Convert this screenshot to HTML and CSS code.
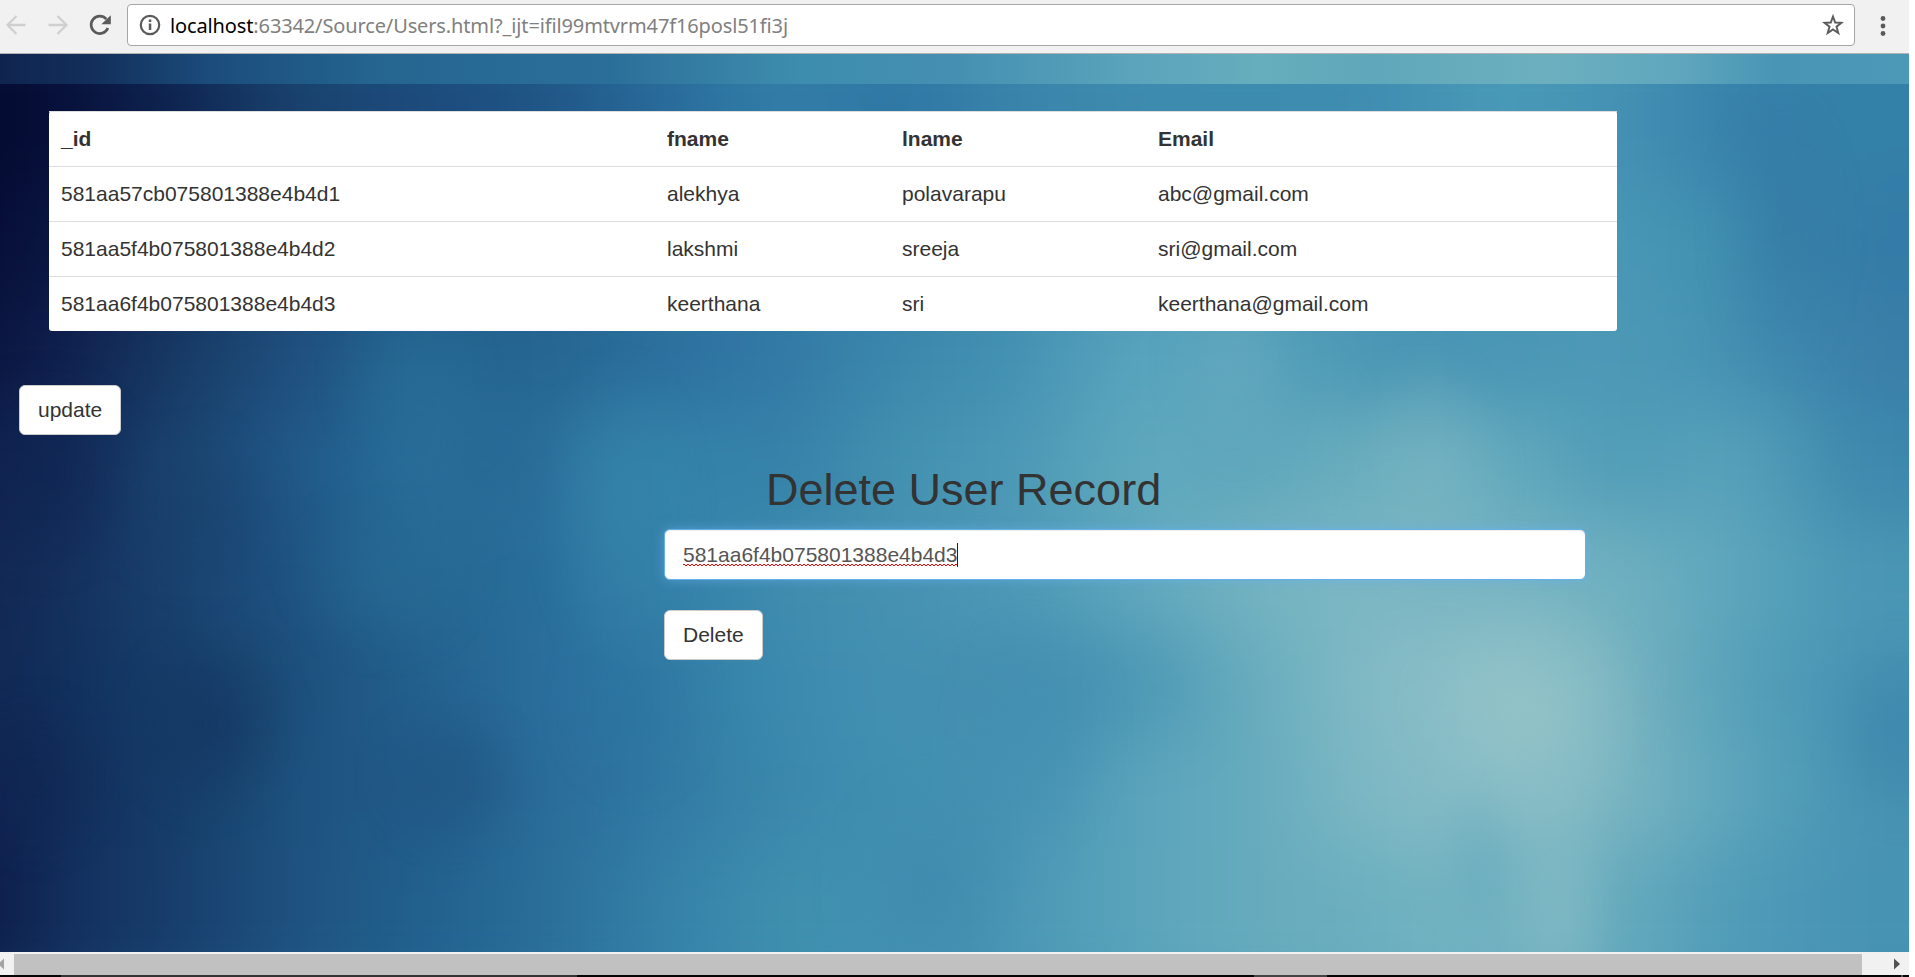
FILE: index.html
```html
<!DOCTYPE html>
<html lang="en">
<head>
<meta charset="utf-8">
<title>Users</title>
<link rel="stylesheet" href="styles.css">
</head>
<body>
<div class="window">
  <header class="toolbar">
    <svg class="nav" viewBox="0 0 118 30" width="118" height="30" fill="none" stroke="#cfcfcf" stroke-width="2.3">
      <path d="M25.5 13H8M16.5 4L7.5 13L16.5 22"/>
      <path d="M48.500 13H66M57.500 4L66.500 13L57.500 22"/>
      <path d="M106.300 7A8.700 8.700 0 1 0 107.900 16" stroke="#5a5a5a" stroke-width="2.700"/>
      <path d="M110.800 3.300V12.200H101.300Z" fill="#5a5a5a" stroke="none"/>
    </svg>
    <div class="address">
      <svg viewBox="0 0 22 22" width="22" height="22"><circle cx="11" cy="11" r="9.200" fill="none" stroke="#5a5a5a" stroke-width="2.200"/><path d="M9.800 9.500h2.500v6.500H9.800zM9.800 5.500h2.500V8H9.800z" fill="#5a5a5a"/></svg>
      <span class="url"><b>localhost</b>:63342/Source/Users.html?_ijt=ifil99mtvrm47f16posl51fi3j</span>
      <svg class="star" viewBox="0 0 22 22" width="22" height="22"><path d="M11 2.500L13.200 8.500L19.500 8.800L14.500 12.700L16.300 19L11 15.400L5.700 19L7.500 12.700L2.500 8.800L8.800 8.500Z" fill="none" stroke="#5a5a5a" stroke-width="1.900"/></svg>
    </div>
    <svg class="menu" viewBox="0 0 6 20" width="6" height="20" fill="#5a5a5a"><circle cx="3" cy="2.500" r="2.400"/><circle cx="3" cy="10" r="2.400"/><circle cx="3" cy="17.500" r="2.400"/></svg>
  </header>
  <main class="page">
    <div class="backdrop">
      <div class="band b0"></div><div class="band b1"></div><div class="band b2"></div><div class="band b3"></div>
      <div class="band b4"></div><div class="band b5"></div><div class="band b6"></div><div class="band b7"></div>
    </div>
    <div class="glow"></div>
    <div class="strip"></div>
    <div class="content">
      <table class="users">
        <colgroup><col class="c-id"><col class="c-fname"><col class="c-lname"><col></colgroup>
        <tr><th>_id</th><th>fname</th><th>lname</th><th>Email</th></tr>
        <tr><td>581aa57cb075801388e4b4d1</td><td>alekhya</td><td>polavarapu</td><td>abc@gmail.com</td></tr>
        <tr><td>581aa5f4b075801388e4b4d2</td><td>lakshmi</td><td>sreeja</td><td>sri@gmail.com</td></tr>
        <tr><td>581aa6f4b075801388e4b4d3</td><td>keerthana</td><td>sri</td><td>keerthana@gmail.com</td></tr>
      </table>
      <button class="btn update">update</button>
      <section class="delete">
        <h2>Delete User Record</h2>
        <div class="field"><span class="value">581aa6f4b075801388e4b4d3</span><i class="caret"></i></div>
        <button class="btn">Delete</button>
      </section>
    </div>
  </main>
  <div class="scrollbar">
    <svg width="14" height="23" viewBox="0 0 14 23"><path d="M4 6.500V17.500L-2 12Z" fill="#a3a3a3"/></svg>
    <div class="thumb"></div>
    <svg width="47" height="23" viewBox="0 0 47 23"><path d="M32 6.500V17.500L38 12Z" fill="#505050"/></svg>
  </div>
  <div class="taskbar"></div>
</div>
</body>
</html>
```
FILE: styles.css
```css
* { box-sizing: border-box; }
body { margin: 0; background: #fff; overflow: hidden; font: 21px/30px "Liberation Sans", Arial, sans-serif; color: #333; }
.window { width: 1909px; height: 977px; display: flex; flex-direction: column; overflow: hidden; }

.toolbar { height: 54px; flex: none; display: flex; align-items: flex-start; background: #f1f1f1; border-bottom: 1px solid #b2b2b2; }
.nav { margin: 12px 9px 0 0; flex: none; }
.address { width: 1728px; height: 42px; margin-top: 4px; padding: 0 10px 0 11px; display: flex; align-items: center; background: #fff; border: 1px solid #a6a6a6; border-radius: 4px; }
.url { margin-left: 9px; padding-top: 1px; flex: 1; font-family: "Noto Sans", "Open Sans", sans-serif; font-size: 20px; letter-spacing: -0.13px; color: #808080; white-space: nowrap; }
.url b { font-weight: 400; color: #000; }
.menu { margin: 16px 0 0 25px; }

.page { position: relative; height: 898px; flex: none; overflow: hidden; background: #3f8bae; }
.backdrop { position: absolute; inset: -49px -100px -60px -100px; display: flex; flex-direction: column; filter: blur(36px); }
.band { flex: 0 0 109px; }
.b0 { flex-basis: 188px; background: linear-gradient(90deg, #040a30 100px, #07103a 160px, #0f2552 280px, #1a446f 400px, #1c4a7c, #1f5585, #286a9a, #337ea8, #2f76a4, #3a84ab, #3d8bae, #3d8cb0, #3f8cb0, #4a9ab8, #4592b4, #3681ab, #3380a8 calc(100% - 155px)); }
.b1 { background: linear-gradient(90deg, #060e38 100px, #0a1742 160px, #122d58 280px, #1b4977 400px, #205888, #22608c, #2a6d9b, #307aa5, #3580a9, #3e8aae, #4b98b6, #4c98b6, #4592b3, #4a97b6, #4a98b6, #4090b0, #347ba7 calc(100% - 155px)); }
.b2 { background: linear-gradient(90deg, #0b1540 100px, #101f4e 160px, #173b65 280px, #205080 400px, #246792, #256490, #2c709e, #3379a6, #3b88ac, #4391b3, #5aa5be, #58a2bb, #4a96b4, #4995b5, #4d9ab6, #4591b3, #3a7fa9 calc(100% - 155px)); }
.b3 { background: linear-gradient(90deg, #10224f 100px, #132b5a 160px, #1b4570, #20598a, #29719c, #2a6f9b, #3484ab, #3480a9, #4391b0, #4b98b6, #60a9bd, #5ea6bc, #6cb0be, #66acbe, #509bb7, #5aa3bb, #3d88ad calc(100% - 155px)); }
.b4 { background: linear-gradient(90deg, #122754 100px, #142f5b 160px, #1a4270, #1e5382, #256791, #286d9a, #3380a9, #3f8cae, #4792b2, #4d99b6, #60a8be, #76b4c1, #7cb7c4, #78b5c3, #70b1c0, #5da6bc, #4a96b4 calc(100% - 155px)); }
.b5 { background: linear-gradient(90deg, #112854 100px, #112f5c 160px, #173f6a, #1d507c, #23608e, #2a6d9b, #2f7ba5, #3b8aae, #4390b2, #448eb0, #4a96b4, #68adbe, #84bbc5, #8cbfc7, #7ab5c1, #56a0b9, #4894b4 calc(100% - 155px)); }
.b6 { background: linear-gradient(90deg, #0f2150 100px, #122d5b 160px, #163e69, #1e5380, #215a89, #2a6b99, #3079a4, #3a87ab, #4190b1, #4591b3, #5ba4bc, #65abbd, #80b9c5, #86bcc6, #7cb6c2, #5ca5bb, #4893b3 calc(100% - 155px)); }
.b7 { flex-basis: 165px; background: linear-gradient(90deg, #0d1d4a 100px, #132f5d 160px, #173e6d, #1f5380, #21608e, #296d98, #3480a8, #3f8fae, #4391b3, #4a97b5, #5aa4bb, #67abbd, #6cb0bf, #78b5c2, #66abbd, #509bb8, #4793b4 calc(100% - 155px)); }
/* Soft light and dark patches over the banded gradient. */
.glow {
  position: absolute; inset: -40px; filter: blur(12px);
  background:
    radial-gradient(ellipse 90px 100px at 250px 710px, #122f5b88, transparent),
    radial-gradient(ellipse 80px 80px at 490px 763px, #1f538099, transparent),
    radial-gradient(ellipse 100px 90px at 425px 560px, #2a6f9a77, transparent),
    radial-gradient(ellipse 80px 90px at 450px 370px, #2a719a77, transparent),
    radial-gradient(ellipse 90px 90px at 235px 495px, #193f6b77, transparent),
    radial-gradient(ellipse 100px 110px at 85px 460px, #0e235088, transparent),
    radial-gradient(ellipse 80px 90px at 75px 765px, #0f265066, transparent),
    radial-gradient(ellipse 90px 80px at 525px 450px, #28659299, transparent),
    radial-gradient(ellipse 80px 100px at 675px 690px, #2c6f9d55, transparent),
    radial-gradient(ellipse 80px 120px at 1075px 715px, #4290b3bb, transparent),
    radial-gradient(ellipse 100px 120px at 970px 875px, #3d89adbb, transparent),
    radial-gradient(ellipse 120px 130px at 1570px 700px, #9ac7c999, transparent),
    radial-gradient(ellipse 50px 110px at 1520px 855px, #66abbe99, transparent),
    radial-gradient(ellipse 60px 170px at 1600px 890px, #86bcc5aa, transparent),
    radial-gradient(ellipse 80px 100px at 1940px 715px, #3883aaaa, transparent),
    radial-gradient(ellipse 70px 150px at 1820px 220px, #32709f66, transparent),
    radial-gradient(ellipse 80px 130px at 1470px 460px, #80b6c277, transparent),
    radial-gradient(ellipse 70px 110px at 1275px 350px, #69adc077, transparent),
    radial-gradient(ellipse 80px 160px at 660px 500px, #3787ad88, transparent);
}
.strip { position: relative; height: 30px; background: linear-gradient(90deg, #0f2550, #132f5b 5%, #1b4c7b 11%, #256691 20%, #2a6f9a 32%, #32789f 35%, #3d8dae 42%, #458fb2 50%, #5aa3bb 59%, #66adbd 66%, #5fa7ba 72%, #6cb0bf 81%, #5fa6bd 88%, #4895b5 93%, #4b98b7); }
.content { position: relative; }

.users { width: 1568px; margin: 27px 0 0 49px; border-collapse: separate; border-spacing: 0; table-layout: fixed; background: #fff; border-radius: 3px; }
.users th, .users td { height: 55px; padding: 12px; text-align: left; line-height: 30px; border-top: 1px solid #ddd; }
.c-id { width: 606px; }
.c-fname { width: 235px; }
.c-lname { width: 256px; }

.btn { display: block; height: 50px; padding: 0 18px; font: inherit; color: #333; background: #fff; border: 1px solid #ccc; border-radius: 6px; }
.update { margin: 54px 0 0 19px; }
.delete { margin: 30px 0 0 664px; width: 922px; }
.delete h2 { margin: 0 0 14px 102px; font-size: 45px; line-height: 50px; font-weight: 400; }
.field { height: 51px; padding: 0 18px; display: flex; align-items: center; background: #fff; border: 1px solid #66afe9; border-radius: 6px; box-shadow: inset 0 1px 1px rgba(0,0,0,.075), 0 0 12px rgba(102,175,233,.6); color: #555; }
.value { line-height: 27px; background: repeating-linear-gradient(90deg, #f00 0 2px, transparent 2px 4px) 0 23px / 100% 1px no-repeat, repeating-linear-gradient(90deg, transparent 0 2px, #f00 2px 4px) 0 24px / 100% 1px no-repeat; }
.caret { width: 1px; height: 24px; background: #222; }
.delete .btn { margin-top: 30px; }

.scrollbar { height: 23px; flex: none; display: flex; background: #f1f1f1; }
.thumb { flex: 1; margin-top: 2px; background: #c1c1c1; }
.taskbar { height: 2px; background: linear-gradient(90deg, #050505 61px, #333 61px 577px, #050505 577px 1254px, #444 1254px 1327px, #050505 1327px 1901px, #555 1901px 1903px, #050505 1903px); }
```
